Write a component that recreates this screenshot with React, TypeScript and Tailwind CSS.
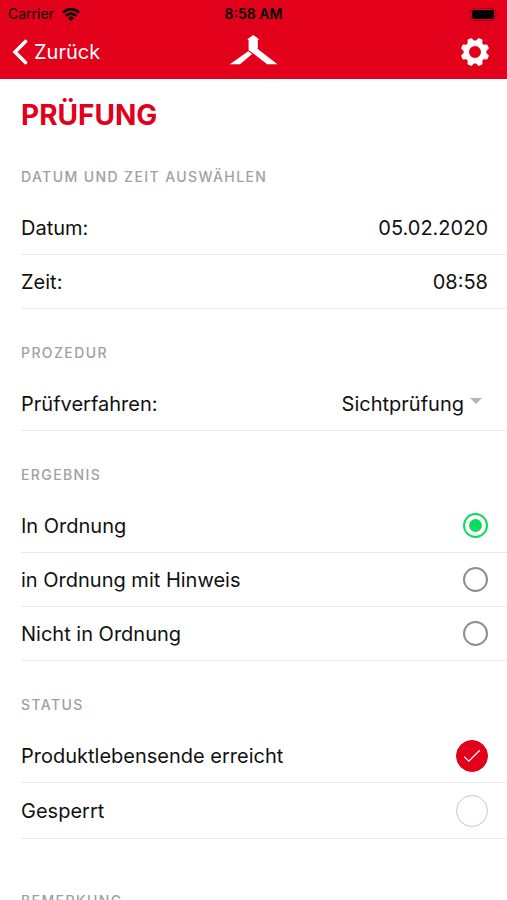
import { useState, type ReactNode } from "react"

const results = ["In Ordnung", "in Ordnung mit Hinweis", "Nicht in Ordnung"]
const teeth = [22.5, 67.5, 112.5, 157.5]

const StatusBar = () => (
  <div className="grid h-7 grid-cols-3 items-center px-2 text-[14px] leading-4 text-black">
    <div className="flex items-center gap-2">
      <span>Carrier</span>
      <svg viewBox="0 0 18 13" className="h-[13px] w-[18px]" fill="none" stroke="currentColor" strokeWidth="2.6">
        <path d="M1 4.6a11.4 11.4 0 0 1 16 0" />
        <path d="M3.8 7.8a7.4 7.4 0 0 1 10.4 0" />
        <path d="M9 13 6 10a4.3 4.3 0 0 1 6 0z" fill="currentColor" stroke="none" />
      </svg>
    </div>
    <span className="text-center font-semibold">8:58 AM</span>
    <svg viewBox="0 0 30 13" className="h-[13px] w-[30px] justify-self-end">
      <rect x="1.5" y="0.5" width="25" height="12" rx="3.5" fill="none" stroke="#a00014" />
      <rect x="3" y="2" width="22" height="9" rx="2" />
      <path d="M28 4.5v4c1.6-.6 1.6-3.4 0-4z" fill="#a00014" />
    </svg>
  </div>
)

const Header = () => (
  <header className="shrink-0 bg-[#e3001b]">
    <StatusBar />
    <nav className="grid h-12 grid-cols-3 items-center pr-[17px] pl-3 text-white">
      <button type="button" className="flex items-center gap-1.5 justify-self-start text-[20px] leading-7">
        <svg viewBox="0 0 16 26" className="h-[26px] w-4" fill="none" stroke="currentColor" strokeWidth="3.6" strokeLinecap="round">
          <path d="M13.5 2.5 3 13l10.5 10.5" />
        </svg>
        Zurück
      </button>
      <svg viewBox="-2 0 54 34" className="h-[34px] w-[54px] justify-self-center" fill="currentColor">
        <path d="M27.2 0 33 4.2l-1.2 1V14L51.5 29.2H41.2L27 18.2l-4.4-2.9V5.2l-1.2-1z" />
        <path d="M22.2 16.2 26.2 18.9 14 29.2H3.8z" />
      </svg>
      <button type="button" aria-label="Einstellungen" className="justify-self-end">
        <svg viewBox="0 0 30 30" className="block size-[30px]" fill="none" stroke="currentColor">
          <circle cx="15" cy="15" r="8.7" strokeWidth="5.4" />
          {teeth.map((angle) => (
            <g key={angle} transform={`rotate(${angle} 15 15)`} fill="currentColor" stroke="none">
              <path d="M11.4 5.2 12.4 1.7Q12.8.7 13.8.7h2.4q1 0 1.4 1l1 3.5z" />
              <path d="M11.4 24.8l1 3.5q.4 1 1.4 1h2.4q1 0 1.4-1l1-3.5z" />
            </g>
          ))}
        </svg>
      </button>
    </nav>
    <div className="h-[3px]" />
  </header>
)

const SectionTitle = ({ children }: { children: ReactNode }) => (
  <h2 className="pb-4 text-[14px] leading-4 font-medium tracking-widest text-[#a0a0a4] uppercase">{children}</h2>
)

const CheckCircle = ({ defaultChecked = false }: { defaultChecked?: boolean }) => (
  <span className="grid size-8 place-items-center">
    <input
      type="checkbox"
      defaultChecked={defaultChecked}
      className="peer col-start-1 row-start-1 size-8 appearance-none rounded-full border border-[#c8c8c8] checked:border-[#e3001b] checked:bg-[#e3001b]"
    />
    <svg viewBox="0 0 18 14" className="pointer-events-none col-start-1 row-start-1 hidden h-[14px] w-[18px] peer-checked:block" fill="none" stroke="white" strokeWidth="1.3">
      <path d="m1.2 7.6 4.6 4.6L16.8 1.2" />
    </svg>
  </span>
)

const rowClass = "flex h-[54px] items-center justify-between border-b border-[#e9e9eb] pr-[19px]"

const App = () => {
  const [date, setDate] = useState("05.02.2020")
  const [time, setTime] = useState("08:58")
  const [result, setResult] = useState(results[0])

  return (
    <div className="flex h-screen flex-col bg-white font-[Inter,'Liberation_Sans',sans-serif] text-[20px] leading-7 text-[#111]">
      <Header />

      <main className="min-h-0 flex-1 overflow-y-auto pl-[21px] [scrollbar-width:none]">
        <h1 className="pt-[18px] text-[28px] leading-9 font-bold text-[#e3001b]">PRÜFUNG</h1>

        {/* Date and time */}
        <section className="pt-9">
          <SectionTitle>Datum und Zeit auswählen</SectionTitle>
          <div className={rowClass}>
            <label htmlFor="date">Datum:</label>
            <input id="date" value={date} onChange={(e) => setDate(e.target.value)} className="w-40 text-right outline-none" />
          </div>
          <div className={rowClass}>
            <label htmlFor="time">Zeit:</label>
            <input id="time" value={time} onChange={(e) => setTime(e.target.value)} className="w-40 text-right outline-none" />
          </div>
        </section>

        {/* Procedure */}
        <section className="pt-9">
          <SectionTitle>Prozedur</SectionTitle>
          <div className={rowClass}>
            <label htmlFor="procedure">Prüfverfahren:</label>
            <div className="flex items-center gap-1.5 pr-1.5">
              <select id="procedure" className="field-sizing-content appearance-none bg-transparent outline-none">
                <option>Sichtprüfung</option>
                <option>Funktionsprüfung</option>
              </select>
              <svg viewBox="0 0 12 12" className="size-3" fill="#b4b4b4">
                <path d="M0 0h12L6 6z" />
              </svg>
            </div>
          </div>
        </section>

        {/* Result */}
        <section className="pt-9">
          <SectionTitle>Ergebnis</SectionTitle>
          {results.map((name) => (
            <label key={name} className={rowClass}>
              {name}
              <span className="grid size-[25px] place-items-center">
                <input
                  type="radio"
                  name="result"
                  checked={result === name}
                  onChange={() => setResult(name)}
                  className="peer col-start-1 row-start-1 size-[25px] appearance-none rounded-full border-2 border-[#8e8e8e] checked:border-[#0bdc5e]"
                />
                <span className="col-start-1 row-start-1 size-[13px] rounded-full peer-checked:bg-[#0bdc5e]" />
              </span>
            </label>
          ))}
        </section>

        {/* Status */}
        <section className="pt-9">
          <SectionTitle>Status</SectionTitle>
          <label className={rowClass}>
            Produktlebensende erreicht
            <CheckCircle defaultChecked />
          </label>
          <label className="flex h-14 items-center justify-between border-b border-[#e9e9eb] pr-[19px]">
            Gesperrt
            <CheckCircle />
          </label>
        </section>

        {/* Remark */}
        <section className="pt-[54px]">
          <SectionTitle>Bemerkung</SectionTitle>
        </section>
      </main>
    </div>
  )
}

export default App
